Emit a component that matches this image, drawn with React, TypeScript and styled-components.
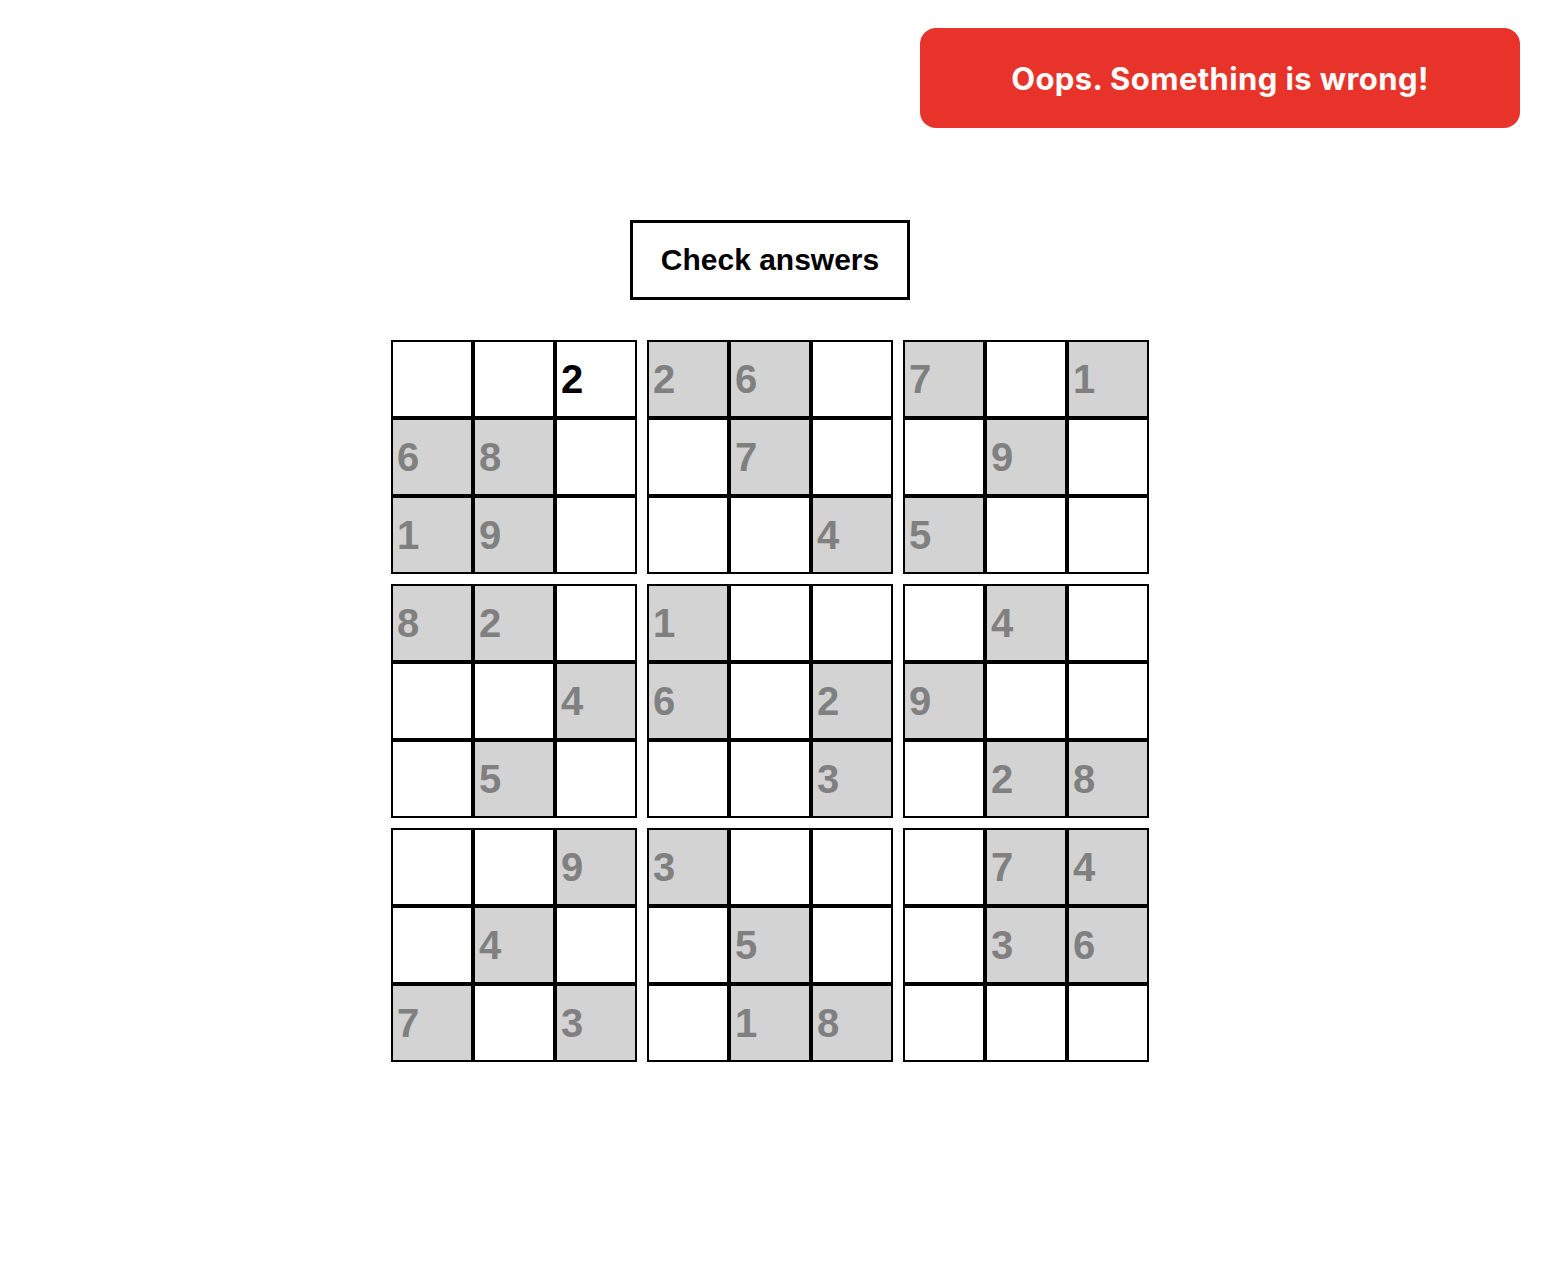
import React from "react";
import styled, { createGlobalStyle } from "styled-components";

const Global = createGlobalStyle`
  html, body { margin: 0; padding: 0; background: #ffffff; }
  body { font-family: "Liberation Sans", Arial, sans-serif; }
`;

const Toast = styled.div`
  position: fixed;
  top: 28px;
  right: 32px;
  width: 600px;
  height: 100px;
  border-radius: 16px;
  background: #e8332a;
  color: #ffffff;
  display: flex;
  align-items: center;
  justify-content: center;
  font-family: Inter, "Noto Sans", sans-serif;
  font-weight: 700;
  font-size: 31px;
  letter-spacing: 0.4px;
`;

const Page = styled.main`
  display: flex;
  flex-direction: column;
  align-items: center;
  padding: 220px 12px 0 0;
  gap: 40px;
`;

const CheckButton = styled.button`
  width: 280px;
  height: 80px;
  border: 3px solid #000;
  background: #fff;
  color: #000;
  font-family: "Liberation Sans", Arial, sans-serif;
  font-weight: 700;
  font-size: 30px;
  padding: 0;
  cursor: pointer;
`;

const Board = styled.div`
  display: grid;
  grid-template-columns: repeat(3, 246px);
  gap: 10px;
`;

const Box = styled.div`
  display: grid;
  grid-template-columns: repeat(3, 82px);
  grid-auto-rows: 78px;
`;

const Cell = styled.div<{ $given: boolean }>`
  box-sizing: border-box;
  border: 2px solid #000;
  background: ${(p) => (p.$given ? "#d3d3d3" : "#ffffff")};
  color: ${(p) => (p.$given ? "#808080" : "#000000")};
  font-family: "Liberation Sans", Arial, sans-serif;
  font-weight: 700;
  font-size: 40px;
  display: flex;
  align-items: center;
  padding-left: 4px;
`;

type C = { v: string; given: boolean };
const g = (v: string): C => ({ v, given: true });
const e: C = { v: "", given: false };
const u = (v: string): C => ({ v, given: false });

const boxes: C[][] = [
  [e, e, u("2"), g("6"), g("8"), e, g("1"), g("9"), e],
  [g("2"), g("6"), e, e, g("7"), e, e, e, g("4")],
  [g("7"), e, g("1"), e, g("9"), e, g("5"), e, e],
  [g("8"), g("2"), e, e, e, g("4"), e, g("5"), e],
  [g("1"), e, e, g("6"), e, g("2"), e, e, g("3")],
  [e, g("4"), e, g("9"), e, e, e, g("2"), g("8")],
  [e, e, g("9"), e, g("4"), e, g("7"), e, g("3")],
  [g("3"), e, e, e, g("5"), e, e, g("1"), g("8")],
  [e, g("7"), g("4"), e, g("3"), g("6"), e, e, e],
];

export default function App() {
  return (
    <>
      <Global />
      <Toast>Oops. Something is wrong!</Toast>
      <Page>
        <CheckButton>Check answers</CheckButton>
        <Board>
          {boxes.map((b, i) => (
            <Box key={i}>
              {b.map((c, j) => (
                <Cell key={j} $given={c.given}>
                  {c.v}
                </Cell>
              ))}
            </Box>
          ))}
        </Board>
      </Page>
    </>
  );
}
